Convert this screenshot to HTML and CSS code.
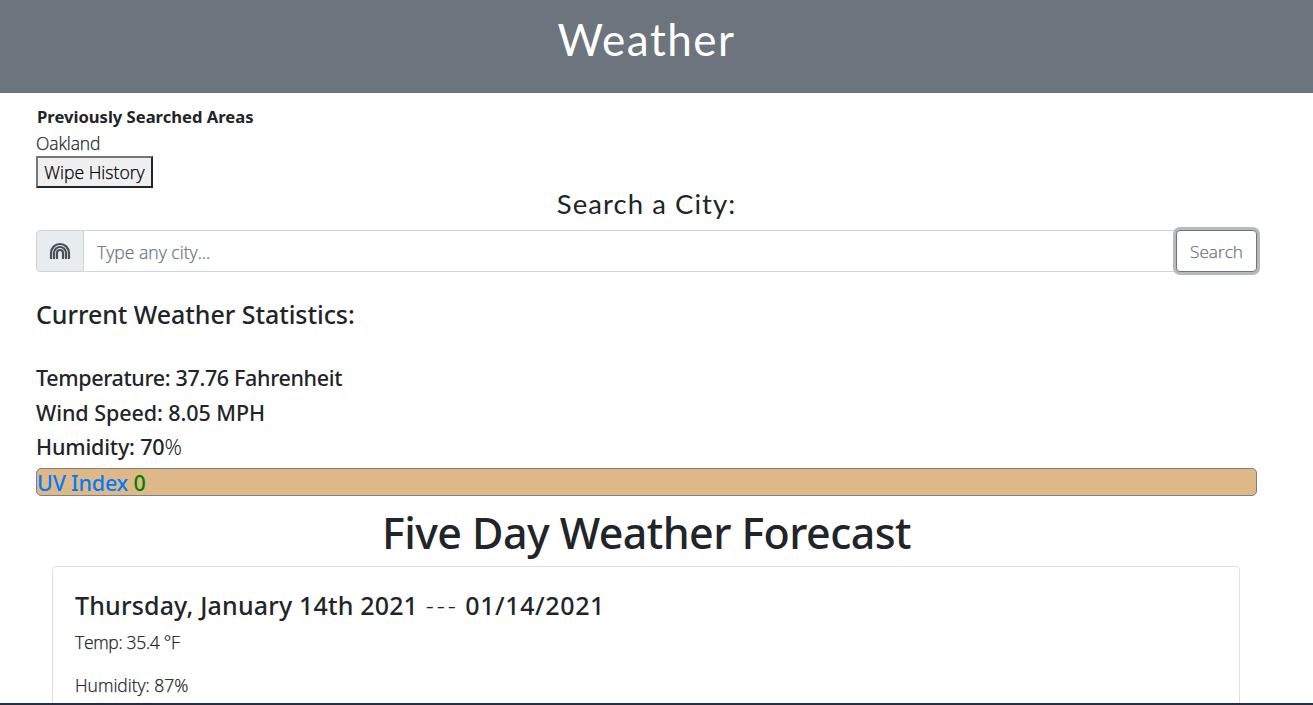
FILE: index.html
```html
<!DOCTYPE html>
<html lang="en">
<head>
<meta charset="utf-8">
<title>Weather</title>
<link rel="stylesheet" href="styles.css">
</head>
<body>
<header class="banner"><h1 class="banner-title"><span>Weather</span></h1></header>
<main class="content">
  <section class="history">
    <div class="history-title"><span>Previously Searched Areas</span></div>
    <div class="history-city"><span>Oakland</span></div>
    <button class="wipe"><span>Wipe History</span></button>
  </section>
  <h3 class="search-title"><span>Search a City:</span></h3>
  <form class="search">
    <div class="search-icon">
      <svg width="22" height="18" viewBox="0 0 22 18" fill="none" stroke="#495057" stroke-width="2.2">
        <path d="M2 17V11a9 9 0 0 1 18 0V17M5 17V11a6 6 0 0 1 12 0V17M8 17V11a3 3 0 0 1 6 0V17"/>
      </svg>
    </div>
    <input class="search-input" type="text" placeholder="Type any city...">
    <button class="search-button" type="button"><span>Search</span></button>
  </form>
  <h4 class="stats-title"><span>Current Weather Statistics:</span></h4>
  <section class="stats">
    <h5 class="stat temperature"><span>Temperature: 37.76 Fahrenheit</span></h5>
    <h5 class="stat wind"><span>Wind Speed: 8.05 MPH</span></h5>
    <h5 class="stat humidity"><span>Humidity: 70<span class="thin">%</span></span></h5>
    <h5 class="uv"><span><a class="uv-link">UV Index</a> <span class="uv-value">0</span></span></h5>
  </section>
  <h1 class="forecast-title"><span>Five Day Weather Forecast</span></h1>
  <article class="card">
    <h4 class="card-title"><span>Thursday, January 14th 2021 <span class="thin dashes">---</span> <span class="card-date">01/14/2021</span></span></h4>
    <p class="card-temp"><span>Temp: 35.4 °F</span></p>
    <p class="card-humidity"><span>Humidity: 87%</span></p>
  </article>
</main>
<footer class="bottom-edge"></footer>
</body>
</html>
```
FILE: styles.css
```css
* { box-sizing: border-box; }
html, body { margin: 0; height: 100%; overflow: hidden; }
body {
  display: flex; flex-direction: column; height: 705px;
  background: #fff; color: #212529;
  font: 300 17.5px/27px "Open Sans", "Noto Sans", sans-serif;
}
h1, h3, h4, h5, p { margin: 0; font-weight: 500; white-space: nowrap; }
.banner { flex: none; height: 93px; background: #6c757d; color: #fff; padding: 13px 20px 0 0; text-align: center; }
.banner-title { font: 400 44px/53px Lato, sans-serif; letter-spacing: 1.5px; }
.content { flex: 1; min-height: 0; overflow: hidden; padding: 10px 56px 0 36px; }
.history { height: 95px; }
.history-title { font-weight: 700; font-family: "Noto Sans", sans-serif; height: 28px; line-height: 27px; font-size: 16.6px; padding-left: 1px; }
.history-city { height: 25px; line-height: 25px; letter-spacing: -0.1px; }
.history-city, .wipe, .search-input, .search-button, .card-temp, .card-humidity { -webkit-text-stroke: 0.25px; }
.wipe {
  display: block; width: 117px; height: 32px; padding: 0;
  background: #efefef; color: #000; border: 2px solid; border-color: #767676 #212529 #212529 #767676;
  font: 300 17.6px/28px "Open Sans", sans-serif;
}
.search-title { height: 42px; margin-top: -10px; font: 400 27.5px/32px Lato, sans-serif; letter-spacing: 1.05px; text-align: center; }
.search { display: flex; height: 42px; }
.search-icon {
  width: 48px; display: flex; align-items: center; justify-content: center;
  background: #e9ecef; border: 1px solid #ced4da; border-radius: 4px 0 0 4px;
}
.search-input {
  flex: 1; min-width: 0; padding: 2px 13px 0; border: 1px solid #ced4da; border-left: 0; border-right: 0; outline: 0;
  font: 300 17.6px "Open Sans", sans-serif; color: #495057;
}
.search-input::placeholder { color: #6c757d; opacity: 1; }
.search-button {
  width: 81px; padding: 0; border: 1px solid #6c757d; border-radius: 4px; background: #fff; color: #6c757d;
  box-shadow: 0 0 0 3px #b5babe; font: 300 17.2px "Open Sans", sans-serif;
}
.stats-title { margin-top: 26px; font: 500 25px/32px "Noto Sans", sans-serif; letter-spacing: -0.06px; }
.stats { padding-top: 31px; }
.stat { height: 34.5px; font: 500 21.5px/34px "Noto Sans", sans-serif; }
.temperature { letter-spacing: -0.35px; }
.wind { letter-spacing: -0.06px; }
.humidity { letter-spacing: -0.17px; }
.thin { font-weight: 300; }
.uv {
  height: 28px; margin-top: 3.5px; border: 1px solid #808080; border-radius: 5px; background: #deb887;
  font: 500 21.5px/28px "Noto Sans", sans-serif; letter-spacing: -0.2px;
}
.uv-link { color: #007bff; }
.uv-value { color: #008000; }
.forecast-title { height: 70px; font: 500 43px/74px "Noto Sans", sans-serif; letter-spacing: -0.57px; text-align: center; }
.card { height: 200px; margin: 0 17px 0 16px; padding: 22px 22px; border: 1px solid #dfdfdf; border-radius: 4px; }
.card-title { font: 500 25px/32px "Noto Sans", sans-serif; letter-spacing: 0.17px; }
.dashes { letter-spacing: 2.9px; margin-left: 1px; }
.card-date { letter-spacing: 0.6px; }
.card-temp, .card-humidity { font-weight: 300; line-height: 27px; }
.card-temp { margin: 8px 0 16px; letter-spacing: -0.3px; }
.bottom-edge { flex: none; height: 2px; background: #252d45; }
```
